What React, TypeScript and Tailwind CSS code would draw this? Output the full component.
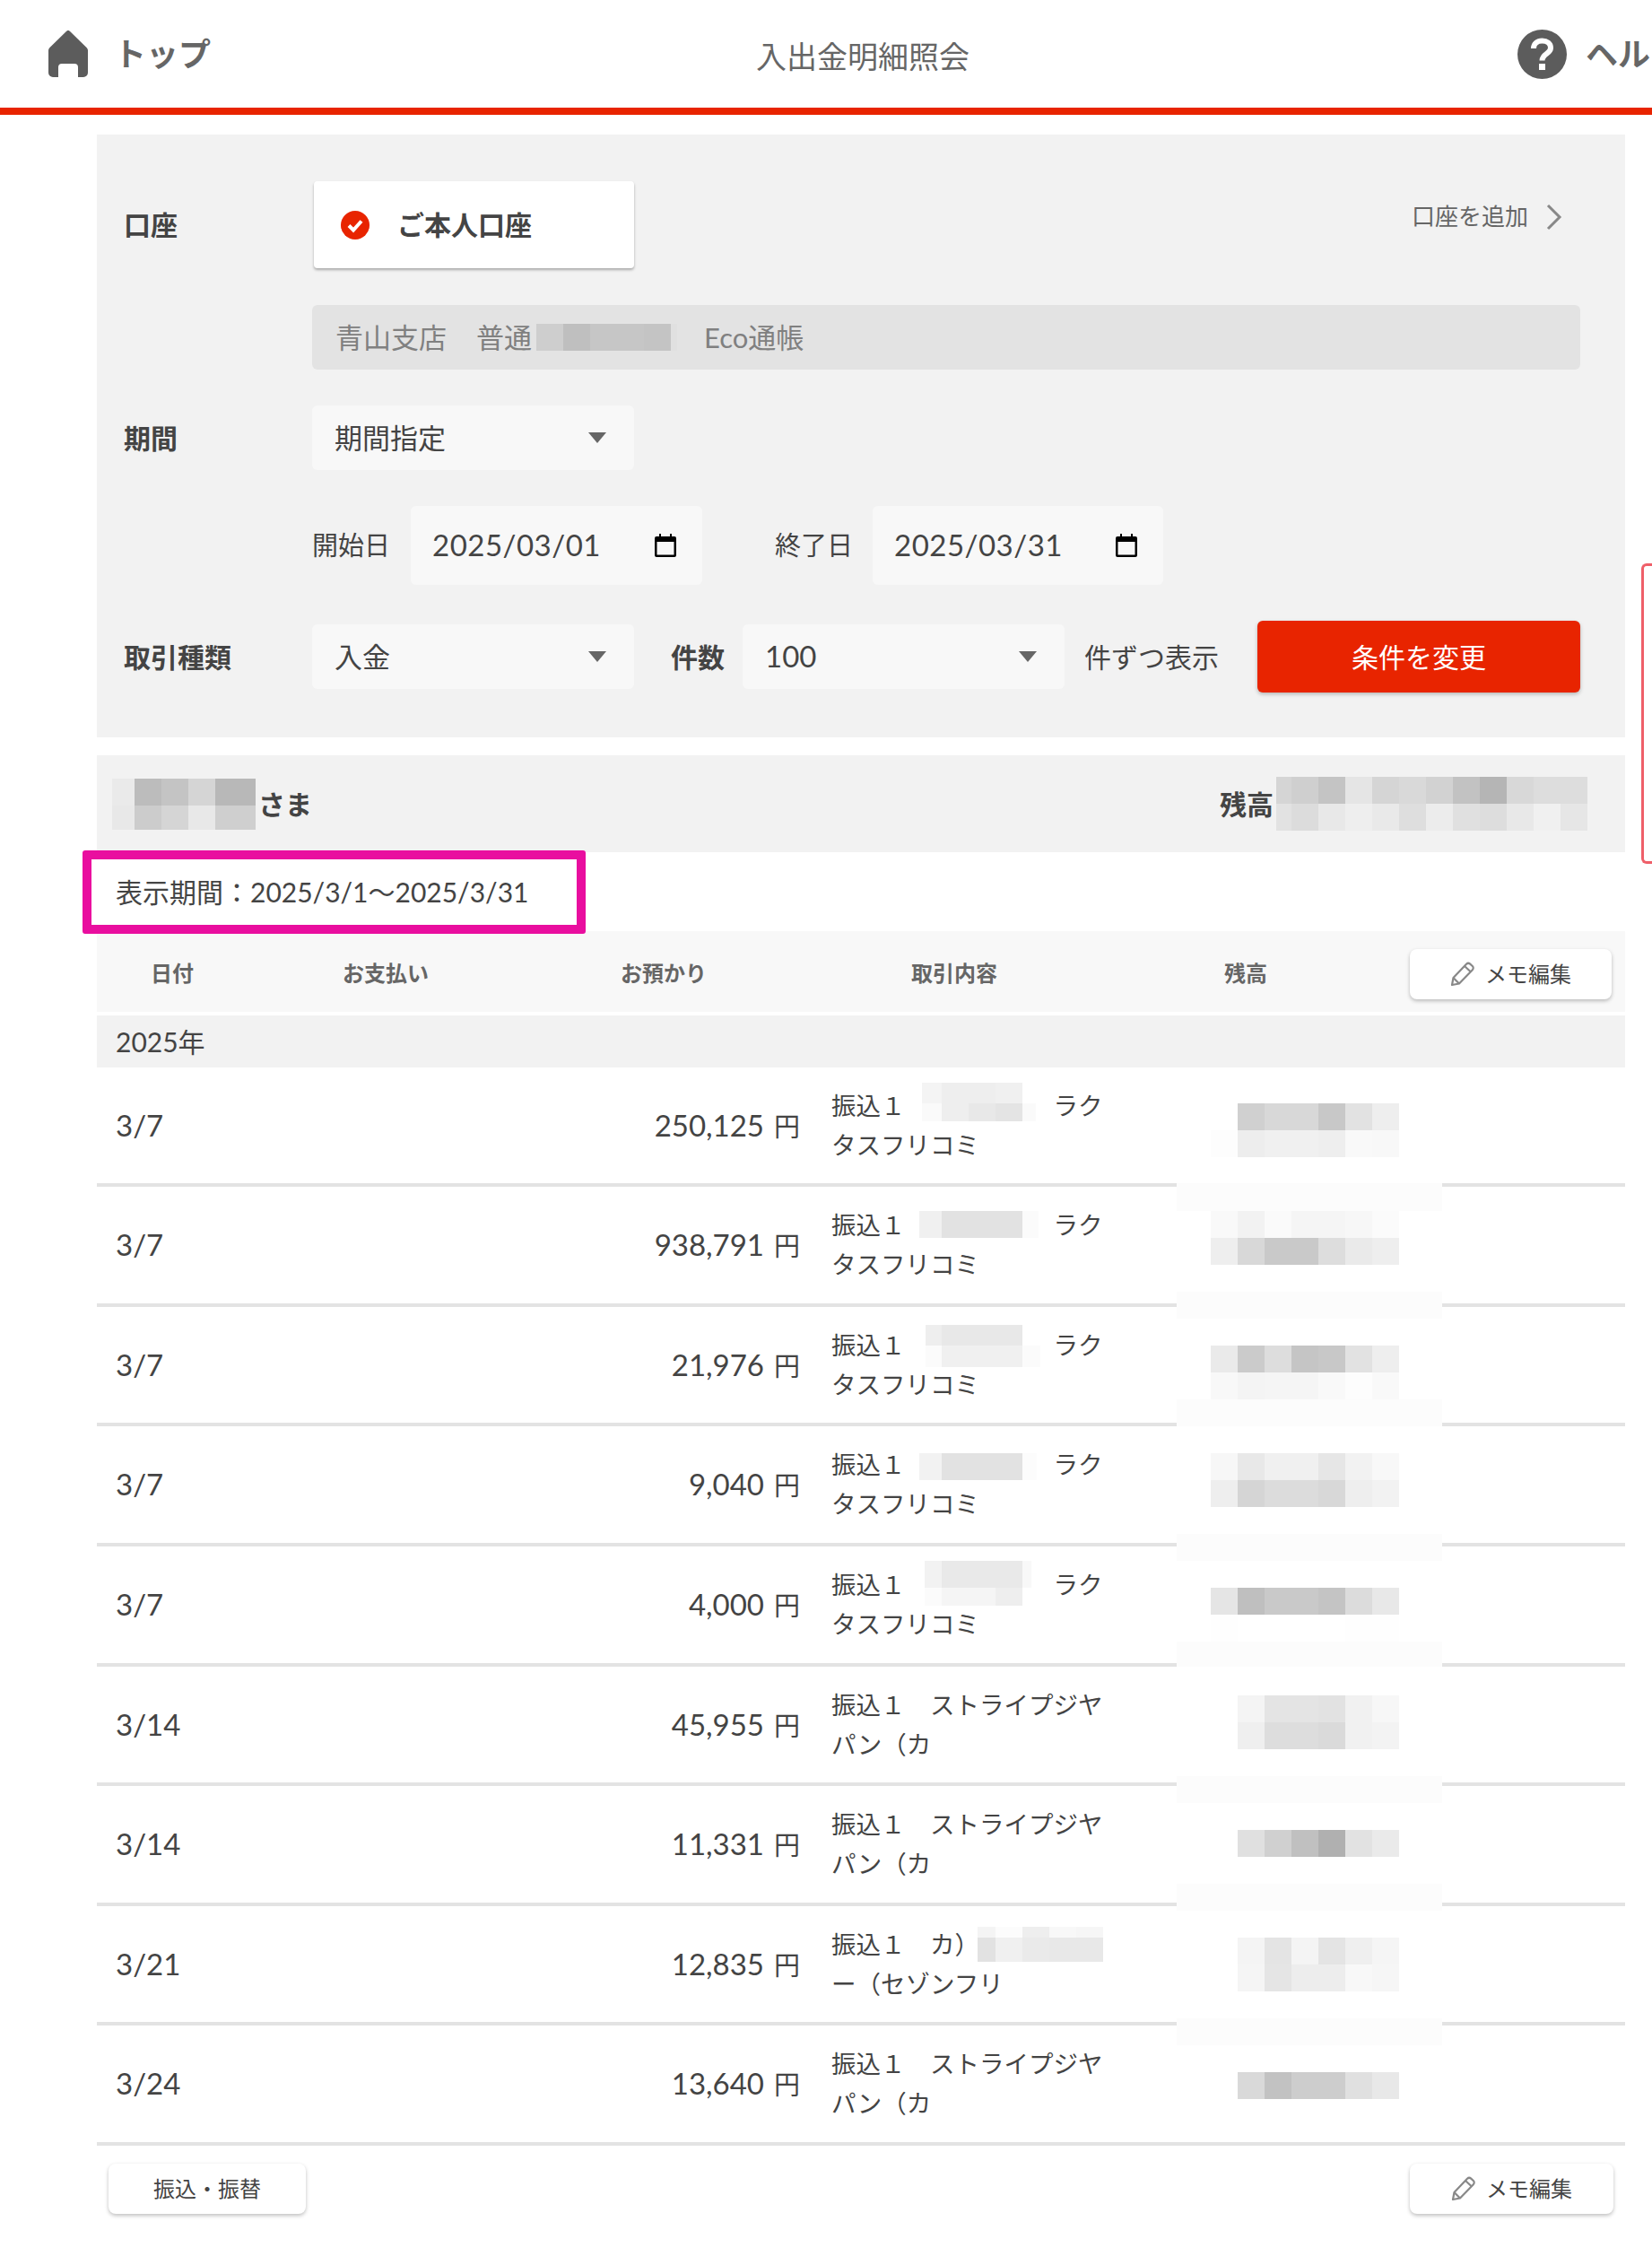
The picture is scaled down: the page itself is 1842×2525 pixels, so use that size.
const balance = (left: number, top: number, rows: [number, string[]][]): MosaicData => ({
  left,
  top,
  widths: rows[0][1].map(() => 30),
  rows,
});

type MosaicData = {
  left: number;
  top: number;
  widths: number[];
  rows: [number, string[]][];
};

type Row = {
  date: string;
  amount: string;
  line1: string;
  line2: string;
  height: string;
  patch?: [number, number];
  memo?: MosaicData;
  bal: MosaicData;
};

const rakuLine = '振込１　　　　　　ラク';
const stripeLine = '振込１　ストライプジヤ';

const rows: Row[] = [
  {
    date: '3/7',
    amount: '250,125',
    line1: rakuLine,
    line2: 'タスフリコミ',
    height: 'h-[133px]',
    patch: [129, 31],
    memo: {
      left: 920,
      top: 17,
      widths: [22, 30, 30, 30, 15],
      rows: [
        [23, ['#f4f4f4', '#eeeeee', '#eeeeee', '#f0f0f0', '#ffffff']],
        [20, ['#fafafa', '#eeeeee', '#e8e8e8', '#e4e4e4', '#fafafa']],
      ],
    },
    bal: balance(1242, 40, [
      [30, ['#ffffff', '#d0d0d0', '#d8d8d8', '#d8d8d8', '#c8c8c8', '#e2e2e2', '#eeeeee']],
      [30, ['#fdfdfd', '#ededed', '#f0f0f0', '#f0f0f0', '#eeeeee', '#f9f9f9', '#f8f8f8']],
    ]),
  },
  {
    date: '3/7',
    amount: '938,791',
    line1: rakuLine,
    line2: 'タスフリコミ',
    height: 'h-[134px]',
    patch: [117, 30],
    memo: {
      left: 917,
      top: 27,
      widths: [25, 90, 18],
      rows: [[30, ['#f0f0f0', '#e2e2e2', '#fbfbfb']]],
    },
    bal: balance(1242, 27, [
      [30, ['#f9f9f9', '#f2f2f2', '#fafafa', '#f5f5f5', '#f5f5f5', '#f7f7f7', '#fbfbfb']],
      [30, ['#eeeeee', '#d8d8d8', '#c9c9c9', '#c9c9c9', '#dddddd', '#eaeaea', '#eeeeee']],
    ]),
  },
  {
    date: '3/7',
    amount: '21,976',
    line1: rakuLine,
    line2: 'タスフリコミ',
    height: 'h-[133px]',
    patch: [103, 30],
    memo: {
      left: 924,
      top: 20,
      widths: [18, 90, 20],
      rows: [
        [23, ['#eeeeee', '#e8e8e8', '#ffffff']],
        [24, ['#fbfbfb', '#f0f0f0', '#fbfbfb']],
      ],
    },
    bal: balance(1242, 43, [
      [30, ['#eaeaea', '#cbcbcb', '#dddddd', '#c5c5c5', '#c8c8c8', '#e2e2e2', '#eeeeee']],
      [30, ['#f8f8f8', '#f4f4f4', '#f5f5f5', '#f5f5f5', '#f9f9f9', '#fdfdfd', '#f9f9f9']],
    ]),
  },
  {
    date: '3/7',
    amount: '9,040',
    line1: rakuLine,
    line2: 'タスフリコミ',
    height: 'h-[134px]',
    patch: [120, 30],
    memo: {
      left: 917,
      top: 30,
      widths: [25, 90, 16],
      rows: [[30, ['#f2f2f2', '#e2e2e2', '#fcfcfc']]],
    },
    bal: balance(1242, 30, [
      [30, ['#f7f7f7', '#e8e8e8', '#f0f0f0', '#f0f0f0', '#e6e6e6', '#f2f2f2', '#f8f8f8']],
      [30, ['#eeeeee', '#d5d5d5', '#dcdcdc', '#dcdcdc', '#d8d8d8', '#eeeeee', '#f2f2f2']],
    ]),
  },
  {
    date: '3/7',
    amount: '4,000',
    line1: rakuLine,
    line2: 'タスフリコミ',
    height: 'h-[134px]',
    patch: [106, 28],
    memo: {
      left: 923,
      top: 16,
      widths: [19, 60, 30, 10],
      rows: [
        [30, ['#f2f2f2', '#e9e9e9', '#e9e9e9', '#f8f8f8']],
        [20, ['#fbfbfb', '#f5f5f5', '#eeeeee', '#ffffff']],
      ],
    },
    bal: balance(1242, 46, [
      [30, ['#e5e5e5', '#bfbfbf', '#c9c9c9', '#c9c9c9', '#c4c4c4', '#dcdcdc', '#e8e8e8']],
      [30, ['#fefefe', '#ffffff', '#ffffff', '#ffffff', '#ffffff', '#fefefe', '#fefefe']],
    ]),
  },
  {
    date: '3/14',
    amount: '45,955',
    line1: stripeLine,
    line2: 'パン（カ',
    height: 'h-[133px]',
    patch: [122, 30],
    bal: balance(1272, 32, [
      [30, ['#f4f4f4', '#e4e4e4', '#e4e4e4', '#e2e2e2', '#f1f1f1', '#f7f7f7']],
      [30, ['#efefef', '#dddddd', '#dddddd', '#dadada', '#f1f1f1', '#f3f3f3']],
    ]),
  },
  {
    date: '3/14',
    amount: '11,331',
    line1: stripeLine,
    line2: 'パン（カ',
    height: 'h-[134px]',
    patch: [109, 30],
    bal: balance(1272, 49, [
      [30, ['#e0e0e0', '#d0d0d0', '#c0c0c0', '#b0b0b0', '#e2e2e2', '#eaeaea']],
    ]),
  },
  {
    date: '3/21',
    amount: '12,835',
    line1: '振込１　カ）',
    line2: 'ー（セゾンフリ',
    height: 'h-[133px]',
    patch: [125, 30],
    memo: {
      left: 982,
      top: 23,
      widths: [20, 30, 30, 30, 30],
      rows: [
        [12, ['#f4f4f4', '#fcfcfc', '#eeeeee', '#f8f8f8', '#f6f6f6']],
        [27, ['#e2e2e2', '#f0f0f0', '#eaeaea', '#e8e8e8', '#e8e8e8']],
      ],
    },
    bal: balance(1272, 35, [
      [30, ['#f4f4f4', '#e4e4e4', '#f4f4f4', '#e4e4e4', '#efefef', '#f5f5f5']],
      [30, ['#f5f5f5', '#e5e5e5', '#ededed', '#ededed', '#f8f8f8', '#f6f6f6']],
    ]),
  },
  {
    date: '3/24',
    amount: '13,640',
    line1: stripeLine,
    line2: 'パン（カ',
    height: 'h-[134px]',
    bal: balance(1272, 52, [
      [30, ['#d9d9d9', '#c2c2c2', '#cdcdcd', '#cdcdcd', '#e0e0e0', '#e8e8e8']],
    ]),
  },
];

function Mosaic({ data, flow = false }: { data: Omit<MosaicData, 'left' | 'top'> & { left?: number; top?: number }; flow?: boolean }) {
  return (
    <div
      className={flow ? 'shrink-0' : 'absolute'}
      style={flow ? undefined : { left: data.left, top: data.top }}
    >
      {data.rows.map(([h, colors], i) => (
        <div key={i} className="flex" style={{ height: h }}>
          {colors.map((c, j) => (
            <div key={j} style={{ width: data.widths[j], backgroundColor: c }} />
          ))}
        </div>
      ))}
    </div>
  );
}

function Arrow() {
  return (
    <svg width="20" height="12" viewBox="0 0 20 12" className="shrink-0">
      <path d="M0 0h20L10 12z" fill="#666666" />
    </svg>
  );
}

function CalendarIcon() {
  return (
    <svg width="24" height="26" viewBox="0 0 24 26" className="shrink-0">
      <path d="M5 0h2v3h10V0h2v3h3a2 2 0 0 1 2 2v19a2 2 0 0 1-2 2H2a2 2 0 0 1-2-2V5a2 2 0 0 1 2-2h3z" fill="#000000" />
      <rect x="2.5" y="9" width="19" height="14.5" fill="#f8f8f8" />
    </svg>
  );
}

function PencilIcon() {
  return (
    <svg width="28" height="28" viewBox="0 0 28 28" fill="none" stroke="#888888" strokeWidth="2.2" strokeLinejoin="round" className="shrink-0">
      <path d="M2 26l1.5-8L18 2.8c1.2-1.2 3-1.2 4.2-.2l2.6 2.4c1.2 1.2 1.2 3 0 4.2L10 24.5z" />
      <path d="M3.5 18l6.5 6.5" />
      <path d="M16 5l7 6.5" />
    </svg>
  );
}

function MemoButton({ width }: { width: string }) {
  return (
    <button className={`${width} flex h-[56px] items-center justify-center gap-[11px] rounded-[8px] bg-white text-[24px] text-[#444444] shadow-[0_2px_4px_rgba(0,0,0,0.25)]`}>
      <PencilIcon />
      <span>メモ編集</span>
    </button>
  );
}

function SelectBox({ label, size = 'text-[31px]' }: { label: string; size?: string }) {
  return (
    <div className={`flex h-[72px] w-[359px] shrink-0 items-center justify-between rounded-[6px] bg-[#f8f8f8] pl-[25px] pr-[31px] text-[#444444] ${size}`}>
      <span>{label}</span>
      <Arrow />
    </div>
  );
}

function DateBox({ value, width }: { value: string; width: string }) {
  return (
    <div className={`${width} flex h-[88px] shrink-0 items-center justify-between rounded-[6px] bg-[#f8f8f8] pl-[24px] pr-[29px] text-[33px] tracking-[0.5px] text-[#444444]`}>
      <span>{value}</span>
      <CalendarIcon />
    </div>
  );
}

export default function App() {
  return (
    <div className="relative h-[2525px] w-[1842px] overflow-hidden bg-white font-['Lato','Noto_Sans_CJK_JP',sans-serif] text-[#444444]">
      <header className="flex h-[128px] items-center overflow-hidden border-b-[8px] border-[#e82400] pl-[54px]">
        <div className="flex w-[789px] shrink-0 items-center gap-[29px]">
          <svg width="44" height="52" viewBox="0 0 44 52">
            <path
              fillRule="evenodd"
              d="M22 0c1 0 2 .6 2.6 1.5L42.5 19c1 1 1.5 2.3 1.500 3.500V47a5 5 0 0 1-5 5h-6V41a4 4 0 0 0-4-4H15a4 4 0 0 0-4 4v11H5a5 5 0 0 1-5-5V22.500C0 21.300.5 20 1.500 19L19.400 1.500C20 .6 21 0 22 0z"
              fill="#5c5c5c"
            />
          </svg>
          <span className="text-[36px] font-bold text-[#666666]">トップ</span>
        </div>
        <div className="w-[849px] shrink-0 pt-[5px] text-[34px] text-[#666666]">入出金明細照会</div>
        <div className="flex shrink-0 items-center gap-[21px]">
          <svg width="55" height="55" viewBox="0 0 55 55" className="shrink-0">
            <circle cx="27.500" cy="27.500" r="27.500" fill="#5c5c5c" />
            <path d="M18 21c0-5.500 4-8.500 9.500-8.500S37 15.500 37 20.500c0 6.500-9.500 6.500-9.500 14" fill="none" stroke="#ffffff" strokeWidth="6" />
            <rect x="24" y="38" width="7" height="7" fill="#ffffff" />
          </svg>
          <span className="whitespace-nowrap text-[36px] font-bold text-[#666666]">ヘルプ</span>
        </div>
      </header>

      <main className="ml-[108px] mt-[22px] w-[1704px]">
        <section className="bg-[#f2f2f2] pb-[50px] pl-[30px] pt-[52px]">
          <div className="flex h-[97px] items-start">
            <div className="flex h-[97px] w-[210px] items-center text-[30px] font-bold">口座</div>
            <div className="ml-[2px] flex h-[97px] w-[357px] items-center gap-[31px] rounded-[4px] bg-white pl-[30px] shadow-[0_2px_3px_rgba(0,0,0,0.3)]">
              <svg width="32" height="32" viewBox="0 0 32 32" className="shrink-0">
                <circle cx="16" cy="16" r="16" fill="#e82400" />
                <path d="M9 16.500l5 5 9-10" fill="none" stroke="#ffffff" strokeWidth="4" />
              </svg>
              <span className="text-[30px] font-bold">ご本人口座</span>
            </div>
            <div className="ml-auto mr-[70px] mt-[20px] flex items-center gap-[20px] text-[26px] text-[#666666]">
              <span>口座を追加</span>
              <svg width="18" height="30" viewBox="0 0 18 30" fill="none" stroke="#888888" strokeWidth="3" className="shrink-0">
                <path d="M2 2l13 13L2 28" />
              </svg>
            </div>
          </div>

          <div className="ml-[210px] mt-[41px] flex h-[72px] w-[1414px] items-center rounded-[6px] bg-[#e3e3e3] pl-[26px] text-[31px] text-[#808080]">
            <span>青山支店</span>
            <span className="ml-[33px]">普通</span>
            <span className="ml-[5px]">
              <Mosaic
                flow
                data={{
                  widths: [30, 30, 60, 30, 7],
                  rows: [[30, ['#cecece', '#bfbfbf', '#c6c6c6', '#c4c4c4', '#e0e0e0']]],
                }}
              />
            </span>
            <span className="ml-[30px]">Eco通帳</span>
          </div>

          <div className="mt-[40px] flex items-center">
            <div className="w-[210px] text-[30px] font-bold">期間</div>
            <SelectBox label="期間指定" />
          </div>

          <div className="ml-[210px] mt-[40px] flex items-center">
            <span className="w-[110px] shrink-0 text-[29px]">開始日</span>
            <DateBox value="2025/03/01" width="w-[325px]" />
            <span className="ml-[81px] w-[109px] shrink-0 text-[29px]">終了日</span>
            <DateBox value="2025/03/31" width="w-[324px]" />
          </div>

          <div className="mt-[40px] flex h-[80px] items-center">
            <div className="w-[210px] shrink-0 text-[30px] font-bold">取引種類</div>
            <SelectBox label="入金" />
            <div className="ml-[41px] w-[80px] shrink-0 text-[30px] font-bold">件数</div>
            <SelectBox label="100" size="text-[33px]" />
            <div className="ml-[22px] w-[193px] shrink-0 text-[30px]">件ずつ表示</div>
            <button className="flex h-[80px] w-[360px] shrink-0 items-center justify-center rounded-[6px] bg-[#e82400] text-[30px] text-white shadow-[0_2px_4px_rgba(0,0,0,0.25)]">
              条件を変更
            </button>
          </div>
        </section>

        <section className="mt-[20px] flex h-[108px] items-center bg-[#f2f2f2] pl-[17px] pr-[42px]">
          <Mosaic
            flow
            data={{
              widths: [25, 30, 30, 30, 45],
              rows: [
                [30, ['#eaeaea', '#bcbcbc', '#c4c4c4', '#d5d5d5', '#b8b8b8']],
                [27, ['#e8e8e8', '#cccccc', '#d5d5d5', '#e8e8e8', '#cfcfcf']],
              ],
            }}
          />
          <span className="ml-[3px] text-[30px] font-bold">さま</span>
          <span className="ml-auto text-[30px] font-bold">残高</span>
          <span className="ml-[3px]">
            <Mosaic
              flow
              data={{
                widths: [17, 30, 30, 30, 30, 30, 30, 30, 30, 30, 30, 30],
                rows: [
                  [30, ['#d5d5d5', '#cfcfcf', '#c4c4c4', '#e5e5e5', '#d5d5d5', '#d9d9d9', '#d2d2d2', '#c2c2c2', '#b5b5b5', '#d8d8d8', '#dddddd', '#dddddd']],
                  [30, ['#e2e2e2', '#dcdcdc', '#e8e8e8', '#eeeeee', '#e9e9e9', '#dedede', '#ececec', '#e0e0e0', '#dddddd', '#e8e8e8', '#f0f0f0', '#e6e6e6']],
                ],
              }}
            />
          </span>
        </section>

        <section className="relative flex h-[88px] items-center pl-[21px] text-[30px]">
          表示期間：2025/3/1～2025/3/31
          <div className="absolute left-[-16px] top-[-2px] h-[93px] w-[561px] rounded-[3px] border-[10px] border-[#e90e9f]" />
        </section>

        <div className="flex h-[90px] items-center bg-[#f8f8f8] pl-[60px] text-[24px] font-bold text-[#666666]">
          <span className="w-[214px] shrink-0 pt-[4px]">日付</span>
          <span className="w-[310px] shrink-0 pt-[4px]">お支払い</span>
          <span className="w-[324px] shrink-0 pt-[4px]">お預かり</span>
          <span className="w-[349px] shrink-0 pt-[4px]">取引内容</span>
          <span className="w-[207px] shrink-0 pt-[4px]">残高</span>
          <div className="pt-[5px] font-normal">
            <MemoButton width="w-[225px]" />
          </div>
        </div>

        <div className="mt-[4px] flex h-[58px] items-center bg-[#f2f2f2] pl-[21px] text-[30px]">2025年</div>

        {rows.map((row, i) => (
          <div key={i} className={`relative flex items-center border-b-[4px] border-[#e3e3e3] ${row.height}`}>
            <span className="w-[300px] shrink-0 pl-[21px] text-[33px]">{row.date}</span>
            <span className="flex w-[484px] shrink-0 items-baseline justify-end gap-[11px]">
              <span className="text-[33px]">{row.amount}</span>
              <span className="text-[29px]">円</span>
            </span>
            <div className="ml-[35px] whitespace-nowrap text-[27.5px] leading-[44px]">
              <div>{row.line1}</div>
              <div>{row.line2}</div>
            </div>
            {row.memo && <Mosaic data={row.memo} />}
            <Mosaic data={row.bal} />
            {row.patch && (
              <div
                className="absolute left-[1204px] w-[296px] bg-[#fcfcfc]"
                style={{ top: row.patch[0], height: row.patch[1] }}
              />
            )}
          </div>
        ))}

        <div className="mt-[20px] flex justify-between pl-[13px] pr-[13px]">
          <button className="h-[56px] w-[220px] rounded-[8px] bg-white text-[24px] text-[#444444] shadow-[0_2px_4px_rgba(0,0,0,0.25)]">
            振込・振替
          </button>
          <MemoButton width="w-[227px]" />
        </div>
      </main>

      <div className="absolute right-0 top-[628px] h-[335px] w-[12px] rounded-l-[6px] border-y-[3px] border-l-[3px] border-[#ef5f69] bg-white" />
    </div>
  );
}
